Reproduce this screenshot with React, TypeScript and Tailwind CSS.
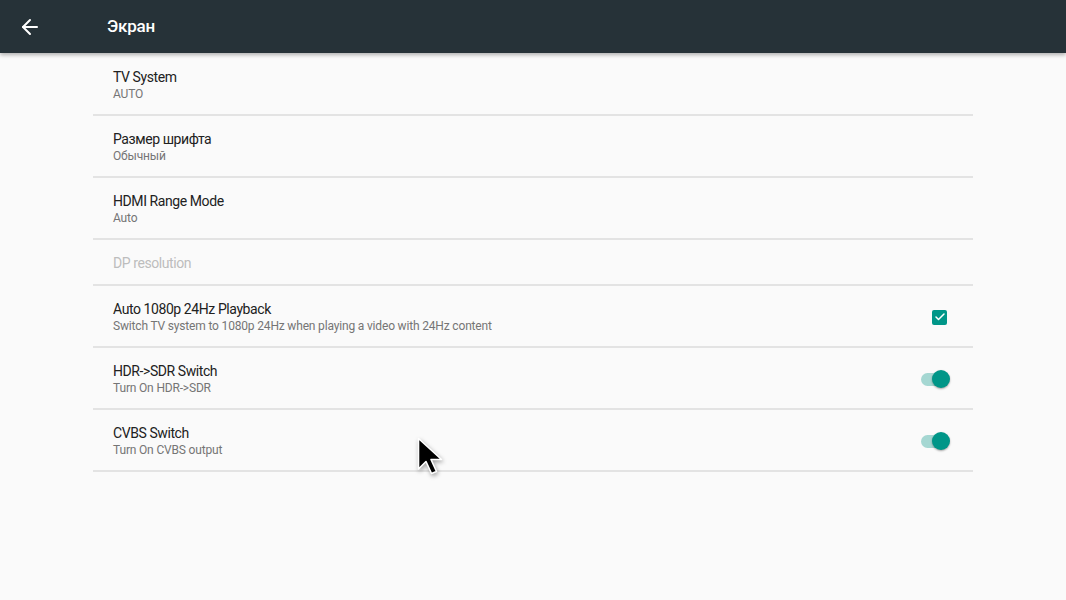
import { ArrowLeft, Check } from 'lucide-react';

type Row = {
  title: string;
  summary?: string;
  disabled?: boolean;
  control?: 'check' | 'switch';
};

const rows: Row[] = [
  { title: 'TV System', summary: 'AUTO' },
  { title: 'Размер шрифта', summary: 'Обычный' },
  { title: 'HDMI Range Mode', summary: 'Auto' },
  { title: 'DP resolution', disabled: true },
  {
    title: 'Auto 1080p 24Hz Playback',
    summary: 'Switch TV system to 1080p 24Hz when playing a video with 24Hz content',
    control: 'check',
  },
  { title: 'HDR->SDR Switch', summary: 'Turn On HDR->SDR', control: 'switch' },
  { title: 'CVBS Switch', summary: 'Turn On CVBS output', control: 'switch' },
];

function Toggle() {
  return (
    <div className="relative w-[30px] h-[20px] flex items-center">
      <div className="w-[26px] h-[13px] rounded-full bg-[#a5d7d2] ml-[1px]" />
      <div className="absolute right-0 top-[1px] w-[18px] h-[18px] rounded-full bg-[#009688] shadow-[0_1px_2px_rgba(0,0,0,0.35)]" />
    </div>
  );
}

function CheckBox() {
  return (
    <div className="w-[15px] h-[15px] rounded-[2px] bg-[#009688] flex items-center justify-center">
      <Check className="w-[12px] h-[12px] text-white" strokeWidth={3} />
    </div>
  );
}

export default function App() {
  return (
    <div className="relative w-[1066px] h-[600px] bg-[#fafafa] overflow-hidden font-['Roboto',sans-serif]">
      <header className="h-[53px] bg-[#263238] flex items-center shadow-[0_2px_4px_rgba(0,0,0,0.3)] relative z-10">
        <ArrowLeft className="w-[24px] h-[24px] text-white ml-[18px]" strokeWidth={2} />
        <h1 className="ml-[65px] text-[17px] font-medium text-white tracking-[-0.2px]">Экран</h1>
      </header>

      <div className="mt-[1px] mx-[93px] w-[880px]">
        {rows.map((r) => (
          <div
            key={r.title}
            className={`flex items-center border-b-[2px] border-[#e3e3e3] pl-[20px] pr-[23px] pt-[2px] ${
              r.summary ? 'h-[62px]' : 'h-[46px]'
            }`}
          >
            <div className="flex-1">
              <div
                className={`text-[14px] leading-[18px] tracking-[-0.42px] ${
                  r.disabled ? 'text-[#bdbdbd]' : 'text-[#212121]'
                }`}
              >
                {r.title}
              </div>
              {r.summary && (
                <div className="text-[12px] leading-[16px] tracking-[-0.17px] text-[#757575]">{r.summary}</div>
              )}
            </div>
            {r.control === 'check' && (
              <div className="mr-[3px]">
                <CheckBox />
              </div>
            )}
            {r.control === 'switch' && <Toggle />}
          </div>
        ))}
      </div>

      <svg
        className="absolute left-[416px] top-[436px] drop-shadow-[1px_2px_2px_rgba(0,0,0,0.35)]"
        width="28"
        height="42"
        viewBox="0 0 28 42"
      >
        <path
          d="M2.5 2.5 L2.5 33 L10 25.5 L15.5 37.5 L20.5 35.5 L15 23.5 L25.5 23.5 Z"
          fill="#000"
          stroke="#fff"
          strokeWidth="1.6"
          strokeLinejoin="round"
        />
      </svg>
    </div>
  );
}
